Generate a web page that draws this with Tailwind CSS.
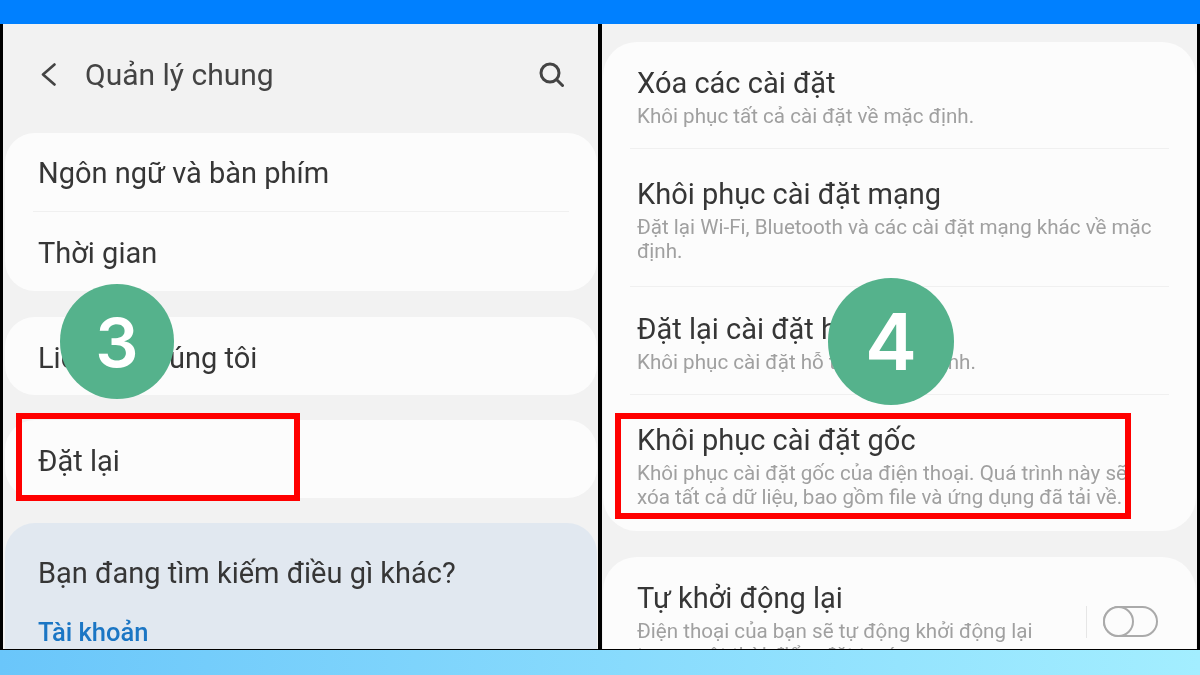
<!DOCTYPE html>
<html lang="vi">
<head>
  <meta charset="UTF-8">
  <meta name="viewport" content="width=device-width, initial-scale=1.0">
  <title>Khôi phục cài đặt gốc</title>
  <script src="https://cdn.jsdelivr.net/npm/@tailwindcss/browser@4"></script>
</head>
<body class="font-['Roboto',sans-serif] bg-black">
  <div class="relative w-[1200px] h-[675px] overflow-hidden flex flex-col">
    <div class="h-[24px] bg-[#0080ff]"></div>

    <div class="h-[626px] flex bg-black pl-[3px] pr-[3px] pb-px overflow-hidden">
      <!-- Left screen -->
      <div class="w-[595px] bg-[#f2f2f2] overflow-hidden pl-[2px] blur-[0.6px]">
        <div class="h-[109px] flex items-center justify-between pl-[36px] pr-[34px] pb-[8px]">
          <div class="flex items-center gap-[29px]">
            <svg class="w-[15px] h-[23px]" viewBox="0 0 15 23" fill="none" stroke="#444" stroke-width="2.6" stroke-linecap="round" stroke-linejoin="round"><path d="M13.5 1.5 2 11.5l11.5 10"/></svg>
            <span class="text-[30px] leading-[36px] text-[#444444]">Quản lý chung</span>
          </div>
          <svg class="w-[25px] h-[25px]" viewBox="0 0 25 25" fill="none" stroke="#444" stroke-width="3" stroke-linecap="round"><circle cx="11" cy="11" r="9"/><path d="m18 18 5.5 5.5"/></svg>
        </div>

        <div class="w-[592px] h-[158px] bg-[#fcfcfc] rounded-[30px]">
          <div class="h-[79px] mx-[28px] border-b border-[#f0f0f0] flex items-center pl-[5px] pt-[4px]">
            <span class="text-[29px] text-[#363636]">Ngôn ngữ và bàn phím</span>
          </div>
          <div class="h-[79px] flex items-center pl-[33px] pt-[5px]">
            <span class="text-[29px] text-[#363636]">Thời gian</span>
          </div>
        </div>

        <div class="w-[592px] h-[78px] mt-[26px] bg-[#fcfcfc] rounded-[30px] flex items-center pl-[33px] pt-[5px]">
          <span class="text-[29px] text-[#363636]">Liên hệ chúng tôi</span>
        </div>

        <div class="w-[592px] h-[78px] mt-[25px] bg-[#fcfcfc] rounded-[30px] flex items-center pl-[33px] pt-[5px]">
          <span class="text-[29px] text-[#363636]">Đặt lại</span>
        </div>

        <div class="w-[592px] h-[140px] mt-[25px] bg-[#e1e8f0] rounded-t-[30px] pl-[33px] pt-[30px]">
          <div class="text-[29px] leading-[40px] text-[#363636]">Bạn đang tìm kiếm điều gì khác?</div>
          <div class="mt-[23px] text-[25.5px] leading-[32px] font-medium text-[#1b76c4]">Tài khoản</div>
        </div>
      </div>

      <div class="w-[4px] bg-black"></div>

      <!-- Right screen -->
      <div class="w-[595px] bg-[#f2f2f2] overflow-hidden pt-[18px] pl-px blur-[0.6px]">
        <div class="w-[593px] h-[489px] bg-[#fcfcfc] rounded-[34px] flex flex-col">
          <div class="h-[107px] mx-[27px] border-b border-[#f0f0f0] pl-[7px] pt-[24px]">
            <div class="text-[29px] leading-[34px] text-[#363636]">Xóa các cài đặt</div>
            <div class="mt-[4px] text-[20.6px] leading-[24px] text-[#a0a0a0]">Khôi phục tất cả cài đặt về mặc định.</div>
          </div>
          <div class="h-[138px] mx-[27px] border-b border-[#f0f0f0] pl-[7px] pt-[28px]">
            <div class="text-[29px] leading-[34px] text-[#363636]">Khôi phục cài đặt mạng</div>
            <div class="mt-[4px] text-[20.6px] leading-[24px] text-[#a0a0a0]">Đặt lại Wi-Fi, Bluetooth và các cài đặt mạng khác về mặc định.</div>
          </div>
          <div class="h-[108px] mx-[27px] border-b border-[#f0f0f0] pl-[7px] pt-[25px]">
            <div class="text-[29px] leading-[34px] text-[#363636]">Đặt lại cài đặt hỗ trợ</div>
            <div class="mt-[4px] text-[20.6px] leading-[24px] text-[#a0a0a0]">Khôi phục cài đặt hỗ trợ về mặc định.</div>
          </div>
          <div class="mx-[27px] pl-[7px] pt-[28px]">
            <div class="text-[29px] leading-[34px] text-[#363636]">Khôi phục cài đặt gốc</div>
            <div class="mt-[4px] text-[20.6px] leading-[24px] text-[#a0a0a0] w-[510px]">Khôi phục cài đặt gốc của điện thoại. Quá trình này sẽ xóa tất cả dữ liệu, bao gồm file và ứng dụng đã tải về.</div>
          </div>
        </div>

        <div class="w-[593px] h-[120px] mt-[26px] bg-[#fcfcfc] rounded-t-[34px] flex justify-between pl-[34px] pr-[38px] pt-[24px]">
          <div>
            <div class="text-[29px] leading-[34px] text-[#363636]">Tự khởi động lại</div>
            <div class="mt-[4px] text-[20.6px] leading-[24px] text-[#a0a0a0]">Điện thoại của bạn sẽ tự động khởi động lại<br>trong một thời điểm đặt trước</div>
          </div>
          <div class="flex items-start gap-[16px] pt-[25px]">
            <div class="w-px h-[32px] bg-[#e6e6e6]"></div>
            <div class="relative w-[55px] h-[31px] rounded-full border-2 border-[#aaaaaa]">
              <div class="absolute -left-[2px] -top-[2px] w-[31px] h-[31px] rounded-full border-2 border-[#aaaaaa] bg-[#fcfcfc]"></div>
            </div>
          </div>
        </div>
      </div>
    </div>

    <div class="h-[25px] bg-gradient-to-r from-[#6ac6fa] to-[#a3eeff]"></div>

    <!-- Overlays: red highlight frames and step badges -->
    <div class="absolute left-[16px] top-[413px] w-[284px] h-[88px] border-[6px] border-[#ff0000]"></div>
    <div class="absolute left-[615px] top-[413px] w-[516px] h-[106px] border-[6px] border-[#ff0000]"></div>
    <div class="absolute left-[883px] top-[392px] w-[3px] h-[4px] bg-[#ff0000]"></div>
    <div class="absolute left-[60px] top-[284px] w-[114px] h-[115px] rounded-full bg-[#55b28c] flex items-center justify-center text-white text-[68px] font-['Inter',sans-serif] font-semibold">3</div>
    <div class="absolute left-[828px] top-[278px] w-[126px] h-[127px] rounded-full bg-[#55b28c] flex items-center justify-center text-white text-[78px] font-['Inter',sans-serif] font-semibold">4</div>
  </div>
</body>
</html>
